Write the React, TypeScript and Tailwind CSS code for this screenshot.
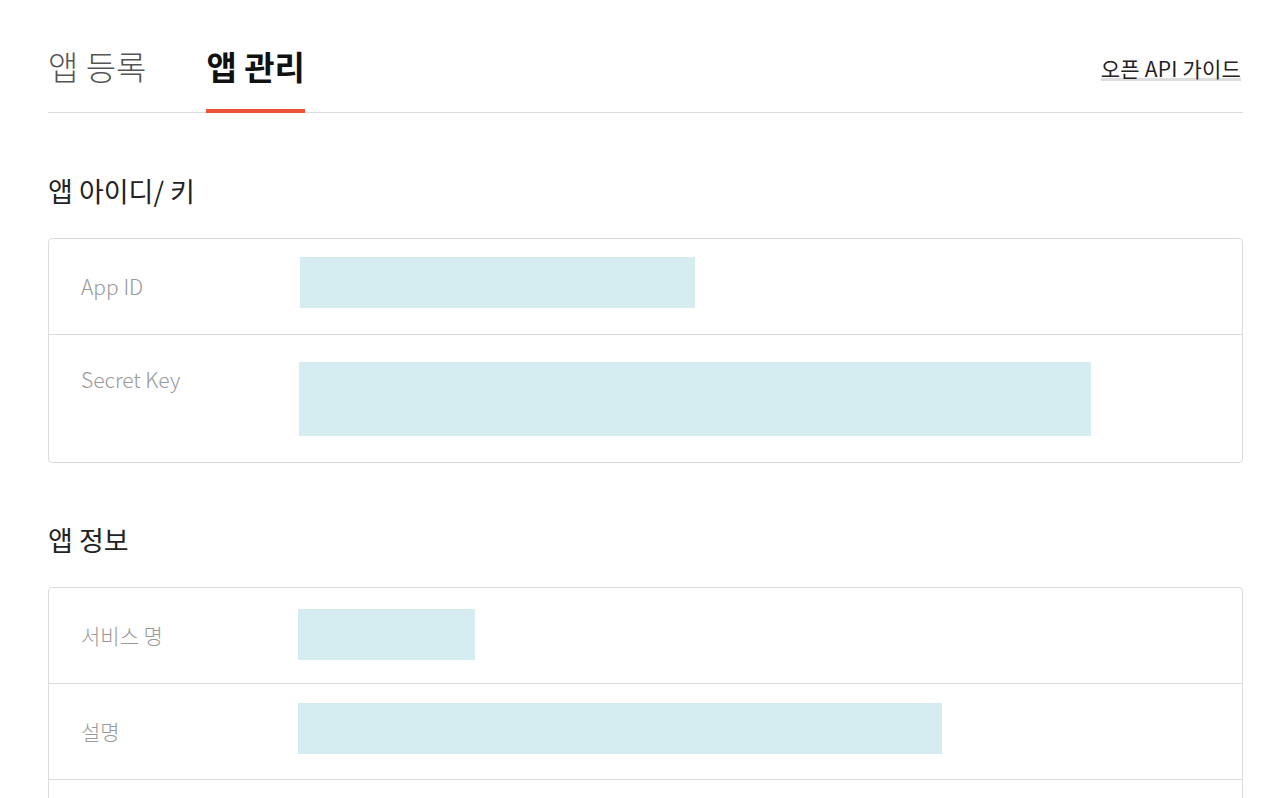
const font = "font-['Noto_Sans_CJK_KR','Noto_Sans',sans-serif]";

type Row = {
  label: string;
  width: number;
  height: number;
  top: string;
  left: string;
  labelTop: string;
  rowHeight: string;
};

function InfoBox({ rows }: { rows: Row[] }) {
  return (
    <div className="rounded-[4px] border border-[#dcdcdc] bg-white">
      {rows.map((row, i) => (
        <div
          key={i}
          className={`flex ${row.rowHeight} ${i < rows.length - 1 ? "border-b border-[#dcdcdc]" : ""}`}
        >
          <div className={`${row.left} shrink-0 pl-[32px] ${row.labelTop} text-[21px] leading-[28px] font-light text-[#999]`}>
            {row.label}
          </div>
          <div className={row.top}>
            {/* value placeholder, width taken from data */}
            <div className="bg-[#d5ecf0]" style={{ width: row.width, height: row.height }} />
          </div>
        </div>
      ))}
    </div>
  );
}

export default function App() {
  const keyRows: Row[] = [
    { label: "App ID", width: 395, height: 51, top: "pt-[18px]", left: "w-[251px]", labelTop: "pt-[33px]", rowHeight: "h-[96px]" },
    { label: "Secret Key", width: 792, height: 74, top: "pt-[27px]", left: "w-[250px]", labelTop: "pt-[30px]", rowHeight: "h-[127px]" },
  ];

  const infoRows: Row[] = [
    { label: "서비스 명", width: 177, height: 51, top: "pt-[21px]", left: "w-[249px]", labelTop: "pt-[33px]", rowHeight: "h-[96px]" },
    { label: "설명", width: 644, height: 51, top: "pt-[19px]", left: "w-[249px]", labelTop: "pt-[33px]", rowHeight: "h-[96px]" },
    { label: "", width: 0, height: 0, top: "pt-[19px]", left: "w-[249px]", labelTop: "pt-[33px]", rowHeight: "h-[96px]" },
  ];

  return (
    <div className={`${font} min-h-screen bg-white`}>
      <div className="ml-[48px] w-[1195px]">
        {/* Tabs */}
        <div className="flex items-start justify-between border-b border-[#dcdcdc] pt-[46px]">
          <div className="flex gap-[60px]">
            <div className="-mb-px border-b-4 border-transparent pb-[23px] text-[33px] leading-[40px] font-light text-[#555]">
              앱 등록
            </div>
            <div className="-mb-px border-b-4 border-[#f0513b] pb-[23px] text-[33px] leading-[40px] font-bold text-[#111]">
              앱 관리
            </div>
          </div>
          <a
            href="#"
            className="mt-[8px] mr-[2px] text-[21px] leading-[28px] tracking-[0.2px] text-[#222] underline decoration-[#dedede] decoration-[3px] underline-offset-[1px]"
          >
            오픈 API 가이드
          </a>
        </div>

        {/* App id / key */}
        <h2 className="mt-[59px] mb-[29px] text-[27px] leading-[37px] text-[#222]">앱 아이디/ 키</h2>
        <InfoBox rows={keyRows} />

        {/* App info */}
        <h2 className="mt-[58px] mb-[29px] text-[27px] leading-[37px] text-[#222]">앱 정보</h2>
        <InfoBox rows={infoRows} />
      </div>
    </div>
  );
}
